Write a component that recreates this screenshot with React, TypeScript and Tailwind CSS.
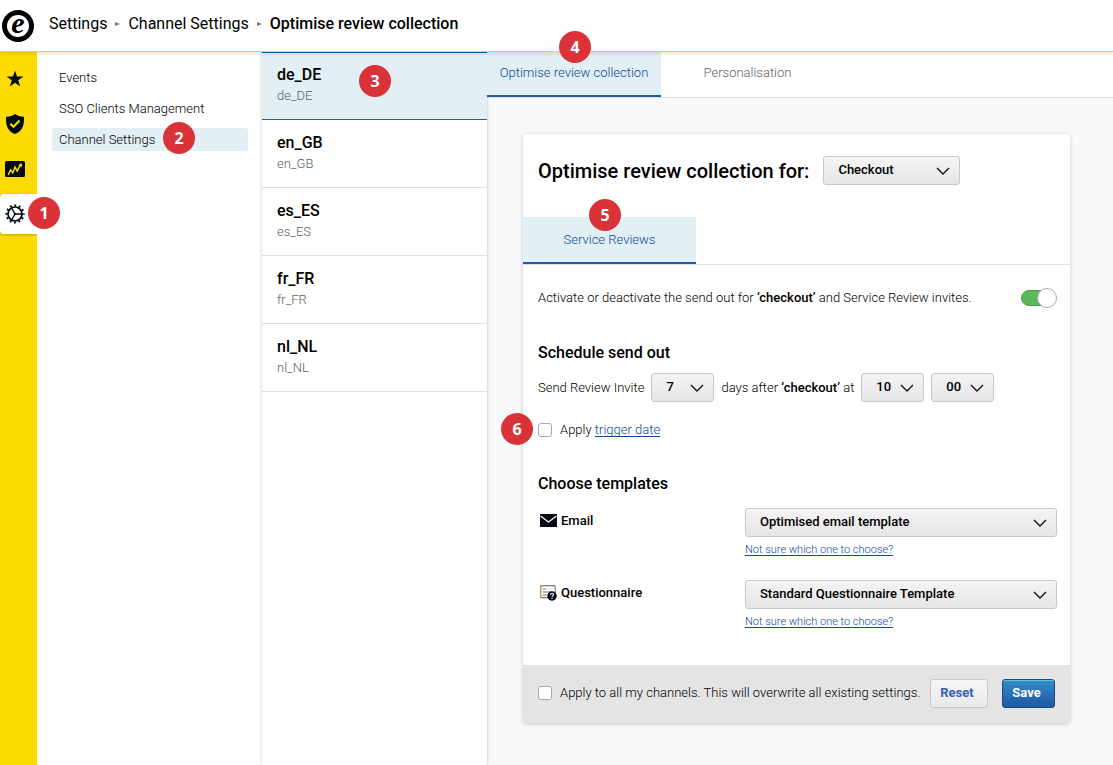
import React, { useState } from 'react';
import clsx from 'clsx';

interface BadgeProps {
  step: number;
  className?: string;
}

const Badge: React.FC<BadgeProps> = ({ step, className }) => (
  <span
    className={clsx(
      'absolute z-20 flex size-8 items-center justify-center rounded-full bg-[#d93339] font-["Noto_Sans",sans-serif] text-base font-bold text-white',
      className
    )}
  >
    {step}
  </span>
);

interface DropdownProps {
  id: string;
  label: string;
  options: string[];
  className?: string;
}

const Dropdown: React.FC<DropdownProps> = ({ id, label, options, className }) => (
  <div className={clsx('relative', className)}>
    <select
      id={id}
      aria-label={label}
      className="block h-[29px] w-full appearance-none rounded-[3px] border border-[#c8c8c8] bg-linear-to-b from-[#f4f4f4] to-[#e6e6e6] pr-6 pb-0.5 pl-3.5 text-[13px] font-medium text-black"
    >
      {options.map((option) => (
        <option key={option}>{option}</option>
      ))}
    </select>
    <svg
      viewBox="0 0 14 8"
      className="pointer-events-none absolute top-[11px] right-2.5 h-2 w-3.5"
      fill="none"
      stroke="#111"
      strokeWidth="1.4"
    >
      <path d="M1 1l6 6 6-6" />
    </svg>
  </div>
);

const StarIcon = () => (
  <svg viewBox="0 0 18 18" className="size-[18px]" fill="#020a14">
    <path d="M9 .5l2 6h6.400l-5.200 3.800 2 6.200L9 12.700l-5.200 3.800 2-6.200L.6 6.500H7z" />
  </svg>
);

const ShieldIcon = () => (
  <svg viewBox="0 0 18 20" className="h-5 w-[18px]">
    <path d="M9 0c2.300 1.700 5 2.500 8.500 2.800.8.100.500 1 .5 2.200 0 7.500-2.500 12.500-9 15C2.500 17.500 0 12.500 0 5c0-1.200-.3-2.100.5-2.200C4 2.500 6.700 1.700 9 0z" fill="#020a14" />
    <path d="M4.300 9.800l3.200 3 6-6.300" fill="none" stroke="#fcdc00" strokeWidth="2" />
  </svg>
);

const GraphIcon = () => (
  <svg viewBox="0 0 20 16" className="h-4 w-5">
    <rect width="20" height="16" rx="1.500" fill="#020a14" />
    <path d="M3.200 14L5.600 8.900l2.200 3 2.200-5.800 2.200 4 3.200-6.500" fill="none" stroke="#fcdc00" strokeWidth="1.500" />
    <path d="M13.300 4.100l3.600-2.100-.1 4.200z" fill="#fcdc00" />
  </svg>
);

const GearIcon = () => (
  <svg viewBox="0 0 20 20" className="size-5" fill="none" stroke="#020a14">
    <circle cx="10" cy="10" r="7" strokeWidth="1.700" />
    <circle cx="10" cy="10" r="8.600" strokeWidth="2" strokeDasharray="1.900 2.603" strokeDashoffset=".95" />
    <path d="M10.500 10H17M10 10L6.600 4.200M10 10l-3.400 5.800" strokeWidth="1.400" />
    <circle cx="10" cy="10" r="1.200" fill="#020a14" stroke="none" />
  </svg>
);

const MailIcon = () => (
  <svg viewBox="0 0 17 13" className="h-[13px] w-[17px]">
    <rect width="17" height="13" rx=".5" fill="#020a14" />
    <path d="M.5 2l8 6 8-6" fill="none" stroke="#fff" strokeWidth="1.200" />
  </svg>
);

const QuestionnaireIcon = () => (
  <svg viewBox="0 0 17 16" className="h-4 w-[17px]">
    <rect x=".7" y=".7" width="14.600" height="12" rx="1" fill="#fff" stroke="#777a80" strokeWidth="1.200" />
    <path d="M.7 1.500v10.500M15.300 1.500V6" stroke="#d69a56" />
    <path d="M2.800 4h3" stroke="#8a8a8a" />
    <path d="M5.800 4h7" stroke="#d8d8d8" />
    <path d="M2.800 7h9M2.800 10h4" stroke="#9a9a9a" strokeWidth="1.600" />
    <circle cx="12" cy="11" r="4.700" fill="#020a14" />
    <path d="M10.500 10c0-2 3-2 3-.2 0 1.100-1.500 1-1.500 2.200M12 12.800v1.200" fill="none" stroke="#fff" strokeWidth="1.100" />
  </svg>
);

const Caret = () => (
  <svg viewBox="0 0 5 4" className="h-1 w-[5px]" fill="#777">
    <path d="M0 0l5 2-5 2z" />
  </svg>
);

const sidebarItems = [
  { name: 'Reviews', icon: <StarIcon /> },
  { name: 'Trust', icon: <ShieldIcon /> },
  { name: 'Analytics', icon: <GraphIcon /> },
  { name: 'Settings', icon: <GearIcon />, active: true },
];

const navItems = ['Events', 'SSO Clients Management', 'Channel Settings'];
const channels = ['de_DE', 'en_GB', 'es_ES', 'fr_FR', 'nl_NL'];

const checkboxClass =
  'size-3.5 shrink-0 appearance-none rounded-[3px] border border-[#a9a9a9] bg-white checked:bg-[#1f5ba6]';
const helpLinkClass = 'mt-[7px] block w-fit text-[11px] leading-3 text-[#0d4a98] underline underline-offset-2';

const App: React.FC = () => {
  const [channel, setChannel] = useState<string>('de_DE');
  const [enabled, setEnabled] = useState<boolean>(true);

  return (
    <div className="flex min-h-screen flex-col bg-white font-[Roboto,sans-serif] text-[13px] font-light text-black">
      <header className="relative z-10 flex h-[52px] items-center border-b border-[#fcdc00] bg-white pl-0.5 shadow-[0_1px_4px_rgba(0,0,0,0.15)]">
        <a
          href="#"
          aria-label="Home"
          className='flex size-8 items-center justify-center rounded-full border-5 border-black pb-1.5 font-["Liberation_Serif",serif] text-3xl leading-8 font-bold text-black italic'
        >
          e
        </a>
        <nav aria-label="Breadcrumb" className="mb-1 ml-[15px] flex items-center gap-2 text-base font-normal">
          <a href="#">Settings</a>
          <Caret />
          <a href="#">Channel Settings</a>
          <Caret />
          <span className="font-medium">Optimise review collection</span>
        </nav>
      </header>

      <div className="flex flex-1">
        <aside className="flex w-[37px] shrink-0 flex-col gap-[5px] bg-[#fcdc00] pt-[7px]">
          {sidebarItems.map((item) => (
            <div key={item.name} className="relative">
              <button
                aria-label={item.name}
                className={clsx(
                  'flex h-10 w-full items-center pl-[5px]',
                  item.active && 'rounded-l bg-white shadow-[0_1px_3px_rgba(0,0,0,0.25)]'
                )}
              >
                <span className="flex w-5 justify-center">{item.icon}</span>
              </button>
              {item.active && <Badge step={1} className="top-[3px] left-7" />}
            </div>
          ))}
        </aside>

        <nav aria-label="Settings" className="relative flex w-[225px] shrink-0 flex-col gap-2 bg-white pt-3.5 pr-3.5 pl-[15px]">
          {navItems.map((item) => {
            const active = item === 'Channel Settings';
            return (
              <a
                key={item}
                href="#"
                className={clsx('relative flex h-[23px] items-center rounded-[3px] pl-[7px]', active && 'bg-[#e2eff5]')}
              >
                {item}
                {active && <Badge step={2} className="-top-1.5 left-[111px]" />}
              </a>
            );
          })}
        </nav>

        {/* Channel list */}
        <div className="relative w-[225px] shrink-0 bg-white shadow-[0_0_3px_rgba(0,0,0,0.25)]">
          {channels.map((name) => (
            <div key={name} className="relative">
              <button
                onClick={() => setChannel(name)}
                className={clsx(
                  'block h-[68px] w-full border-y pb-1 pl-[15px] text-left',
                  channel === name ? 'border-[#1f5ba6] bg-[#e2eff5]' : 'border-t-transparent border-b-[#e0e0e0]'
                )}
              >
                <span className="block text-base leading-6 font-medium">{name}</span>
                <span className="block leading-[18px] text-[#606060]">{name}</span>
              </button>
              {name === 'de_DE' && <Badge step={3} className="top-[13px] left-[97px]" />}
            </div>
          ))}
        </div>

        <main className="min-w-0 flex-1 bg-[#f8f9fb]">
          <div className="flex h-[46px] border-b border-[#e0e0e0] bg-white">
            <div className="relative">
              <button className="h-[45px] w-[174px] border-b-2 border-[#1f5ba6] bg-[#e2eff5] pb-0.5 text-[#0d4a98]">
                Optimise review collection
              </button>
              <Badge step={4} className="-top-[21px] left-[72px]" />
            </div>
            <button className="h-[45px] w-[173px] pb-1 text-[#606060]">Personalisation</button>
          </div>

          <section className="mt-9 mr-[43px] ml-9 rounded bg-white shadow-[0_1px_4px_rgba(0,0,0,0.2)]">
            <div className="flex items-center gap-3.5 px-[15px] pt-[22px]">
              <h1 className="text-xl font-medium">Optimise review collection for:</h1>
              <Dropdown id="event" label="Event" options={['Checkout', 'Shipping']} className="w-[137px]" />
            </div>

            <div className="mt-8 flex h-12 border-b border-[#e0e0e0]">
              <div className="relative">
                <button className="h-[47px] w-[173px] border-b-2 border-[#1f5ba6] bg-[#e2eff5] text-[#0d4a98]">
                  Service Reviews
                </button>
                <Badge step={5} className="-top-[18px] left-[66px]" />
              </div>
            </div>

            <div className="pr-[13px] pl-[15px]">
              <div className="mt-[23px] flex h-5 items-center justify-between">
                <label htmlFor="enabled">
                  Activate or deactivate the send out for <b className="font-medium">‘checkout’</b> and Service Review invites.
                </label>
                <div className="relative h-5 w-9">
                  <input
                    id="enabled"
                    type="checkbox"
                    role="switch"
                    checked={enabled}
                    onChange={() => setEnabled(!enabled)}
                    className="mt-0.5 block h-4 w-8 appearance-none rounded-full border border-[#4a9b4a] bg-[#5cb85c]"
                  />
                  <span className="pointer-events-none absolute top-0 right-0 size-5 rounded-full border border-[#a9a9a9] bg-white" />
                </div>
              </div>

              <h2 className="mt-[33px] text-base font-medium">Schedule send out</h2>
              <div className="mt-2 flex items-center gap-[7px]">
                <label htmlFor="days">Send Review Invite</label>
                <Dropdown id="days" label="Days" options={['7', '14', '21']} className="w-[63px]" />
                <span>
                  days after <b className="font-medium">‘checkout’</b> at
                </span>
                <Dropdown id="hour" label="Hour" options={['10', '11', '12']} className="w-[63px]" />
                <Dropdown id="minute" label="Minute" options={['00', '15', '30']} className="w-[63px]" />
              </div>

              <div className="relative mt-[18px] flex h-5 items-center gap-2">
                <Badge step={6} className="-top-[7px] -left-[37px]" />
                <input id="trigger" type="checkbox" className={checkboxClass} />
                <label htmlFor="trigger">
                  Apply{' '}
                  <a href="#" className="text-[#0d4a98] underline underline-offset-2">
                    trigger date
                  </a>
                </label>
              </div>

              <h2 className="mt-8 text-base font-medium">Choose templates</h2>
              <div className="mt-3 flex justify-between">
                <label htmlFor="email" className="flex h-[25px] items-center gap-1 pl-0.5 font-medium">
                  <MailIcon />
                  Email
                </label>
                <div className="w-[312px]">
                  <Dropdown id="email" label="Email" options={['Optimised email template', 'Standard email template']} />
                  <a href="#" className={helpLinkClass}>
                    Not sure which one to choose?
                  </a>
                </div>
              </div>
              <div className="mt-6 flex justify-between">
                <label htmlFor="questionnaire" className="flex h-[25px] items-center gap-1 pl-0.5 font-medium">
                  <QuestionnaireIcon />
                  Questionnaire
                </label>
                <div className="w-[312px]">
                  <Dropdown id="questionnaire" label="Questionnaire" options={['Standard Questionnaire Template']} />
                  <a href="#" className={helpLinkClass}>
                    Not sure which one to choose?
                  </a>
                </div>
              </div>
            </div>

            <footer className="mt-[37px] flex h-[58px] items-center rounded-b bg-[#e4e4e4] px-[15px] pb-0.5">
              <input id="all" type="checkbox" className={checkboxClass} />
              <label htmlFor="all" className="ml-2">
                Apply to all my channels. This will overwrite all existing settings.
              </label>
              <button className="ml-auto h-[29px] w-[58px] rounded-[3px] border border-[#c8c8c8] bg-linear-to-b from-[#f6f6f6] to-[#e9e9e9] pr-1 font-bold text-[#3a5fb5]">
                Reset
              </button>
              <button className="ml-3.5 h-[29px] w-[53px] rounded-[3px] border border-[#174a8c] bg-linear-to-b from-[#368cca] to-[#1d58a2] pr-1 font-bold text-white shadow-[inset_0_1px_0_#5bc8dc]">
                Save
              </button>
            </footer>
          </section>
        </main>
      </div>
    </div>
  );
};

export default App;
